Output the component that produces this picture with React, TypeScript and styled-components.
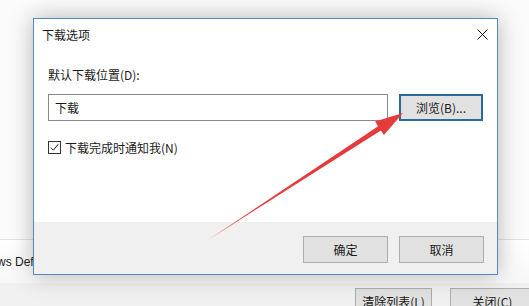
import React from "react";
import styled, { createGlobalStyle } from "styled-components";

const GlobalStyle = createGlobalStyle`
  html, body {
    margin: 0;
    padding: 0;
    background: #fbfbfb;
    font-family: "Noto Sans CJK SC", "Microsoft YaHei", "Liberation Sans", sans-serif;
    font-size: 12px;
    color: #1a1a1a;
  }
`;

const Page = styled.div`
  position: relative;
  width: 529px;
  height: 306px;
  overflow: hidden;
  display: flex;
  flex-direction: column;
`;

const TopArea = styled.div`
  flex-shrink: 0;
  height: 239px;
  border-bottom: 1px solid #e2e2e2;
`;

const InfoRow = styled.div`
  flex-shrink: 0;
  height: 43px;
  display: flex;
  align-items: center;
  font-family: "Liberation Sans", sans-serif;
  font-size: 12px;
  text-indent: -3px;
  color: #222;
  white-space: nowrap;
  background: linear-gradient(#ffffff, #f7f7f7);
`;

const BottomBar = styled.div`
  flex: 1;
  min-height: 0;
  background: #f0f0f0;
  display: flex;
  padding: 5px 0 0 355px;
  gap: 18px;
`;

const Dialog = styled.div`
  position: absolute;
  left: 33px;
  top: 18px;
  width: 463px;
  height: 255px;
  background: #fff;
  border: 1px solid #4f8cbf;
  box-shadow: 0 0 22px rgba(0, 0, 0, 0.28);
  display: flex;
  flex-direction: column;
`;

const TitleBar = styled.div`
  flex-shrink: 0;
  height: 30px;
  display: flex;
  align-items: center;
  justify-content: space-between;
  padding: 0 9px 0 8px;
  font-size: 12px;
`;

const CloseIcon = styled.svg`
  width: 11px;
  height: 11px;
`;

const Body = styled.div`
  flex: 1;
  padding: 18px 14px 0 14px;
  display: flex;
  flex-direction: column;
`;

const Label = styled.div`
  height: 16px;
  line-height: 16px;
`;

const PathRow = styled.div`
  margin-top: 11px;
  display: flex;
  gap: 11px;
`;

const PathInput = styled.div`
  width: 338px;
  height: 25px;
  border: 1px solid #8a8a8a;
  display: flex;
  align-items: center;
  padding-left: 6px;
  box-sizing: content-box;
`;

const Button = styled.div<{ $primary?: boolean; $width?: number }>`
  flex-shrink: 0;
  width: ${(p) => p.$width ?? 85}px;
  height: 27px;
  box-sizing: border-box;
  background: #e1e1e1;
  border: ${(p) => (p.$primary ? "2px solid #2c6a9c" : "1px solid #adadad")};
  display: flex;
  align-items: center;
  justify-content: center;
  font-size: 12px;
  color: #1a1a1a;
`;

const CheckRow = styled.label`
  margin-top: 19px;
  display: flex;
  align-items: center;
  gap: 4px;
  height: 14px;
`;

const CheckBox = styled.span`
  width: 11px;
  height: 11px;
  border: 1px solid #333;
  display: flex;
  align-items: center;
  justify-content: center;
  background: #fff;
`;

const Footer = styled.div`
  flex-shrink: 0;
  box-sizing: border-box;
  height: 52px;
  background: #f0f0f0;
  display: flex;
  justify-content: flex-end;
  align-items: flex-start;
  padding: 14px 13px 0 0;
  gap: 11px;
`;

const ArrowLayer = styled.svg`
  position: absolute;
  left: 0;
  top: 0;
  width: 529px;
  height: 306px;
  pointer-events: none;
`;

const App: React.FC = () => {
  return (
    <>
      <GlobalStyle />
      <Page>
        <TopArea />
        <InfoRow>ws Defender</InfoRow>
        <BottomBar>
          <Button $width={77}>清除列表(L)</Button>
          <Button $width={85}>关闭(C)</Button>
        </BottomBar>

        <Dialog>
          <TitleBar>
            <span>下载选项</span>
            <CloseIcon viewBox="0 0 11 11">
              <path d="M0.5 0.5 L10.5 10.5 M10.5 0.5 L0.5 10.5" stroke="#111" strokeWidth="1" fill="none" />
            </CloseIcon>
          </TitleBar>
          <Body>
            <Label>默认下载位置(D):</Label>
            <PathRow>
              <PathInput>下载</PathInput>
              <Button $primary $width={84}>浏览(B)...</Button>
            </PathRow>
            <CheckRow>
              <CheckBox>
                <svg width="9" height="9" viewBox="0 0 9 9">
                  <path d="M0.8 4.6 L3.4 7.2 L8.2 1.2" stroke="#222" strokeWidth="1" fill="none" />
                </svg>
              </CheckBox>
              <span>下载完成时通知我(N)</span>
            </CheckRow>
          </Body>
          <Footer>
            <Button>确定</Button>
            <Button>取消</Button>
          </Footer>
        </Dialog>

        <ArrowLayer viewBox="0 0 529 306">
          <polygon
            points="208,240 378.1,126.2 375.1,121.6 403,113 383.9,135 380.9,130.4"
            fill="#e53b3b"
          />
        </ArrowLayer>
      </Page>
    </>
  );
};

export default App;
